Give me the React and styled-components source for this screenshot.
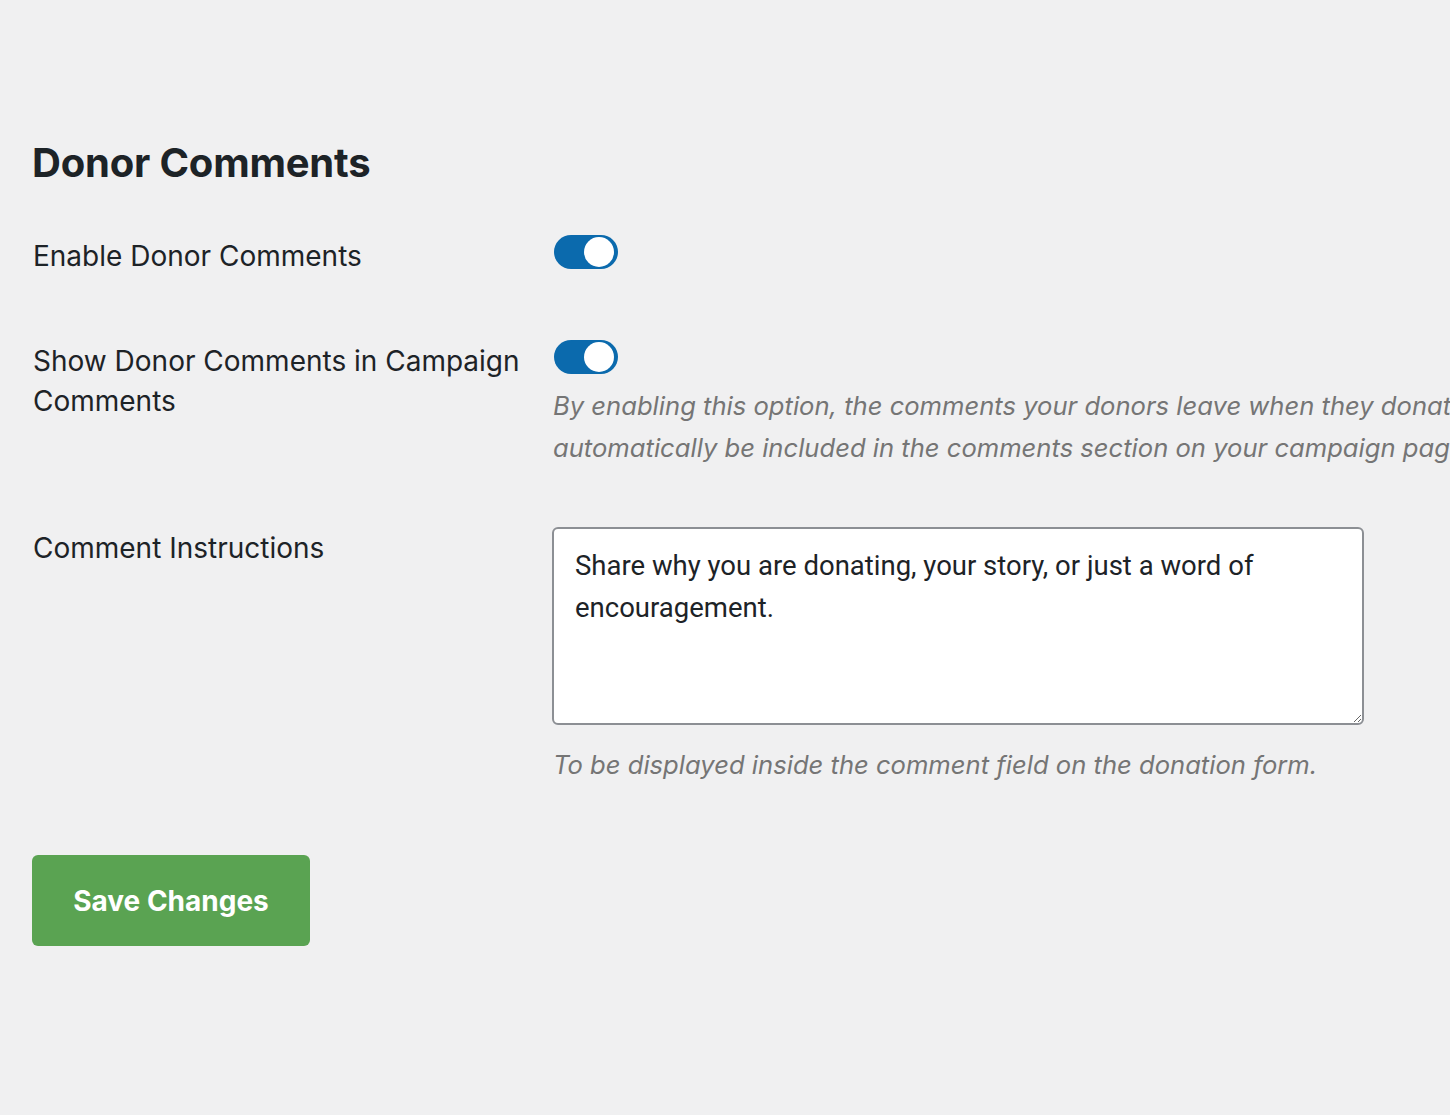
import React from "react";
import styled, { createGlobalStyle } from "styled-components";

// Global
const GlobalStyle = createGlobalStyle`
  html, body {
    margin: 0;
    padding: 0;
    background: #f0f0f1;
    overflow: hidden;
  }
  * {
    box-sizing: border-box;
  }
`;

// Styles
const Page = styled.div`
  width: 1450px;
  height: 1115px;
  padding: 139px 0 0 32px;
  font-family: Inter, "Noto Sans", sans-serif;
  color: #1d2327;
  background: #f0f0f1;
  overflow: hidden;
`;

const Title = styled.h2`
  margin: 0 0 48px;
  font-size: 40px;
  font-weight: 700;
  line-height: 48px;
  letter-spacing: -0.2px;
  color: #1d2327;
`;

const Row = styled.div`
  display: grid;
  grid-template-columns: 520px 1fr;
  align-items: start;
  margin-bottom: ${(p) => p.$gap || 0}px;
`;

const Label = styled.div`
  padding: 1px 10px 0 1px;
  font-size: 28px;
  line-height: 40px;
  color: #1d2327;
`;

const Field = styled.div`
  display: flex;
  flex-direction: column;
  align-items: flex-start;
  min-width: 0;
`;

const Toggle = styled.span`
  position: relative;
  display: block;
  width: 64px;
  height: 34px;
  margin-left: 2px;
  border-radius: 17px;
  background: #0b6aad;
`;

const Knob = styled.span`
  position: absolute;
  top: 2px;
  right: 4px;
  width: 30px;
  height: 30px;
  border-radius: 50%;
  background: #fff;
`;

const Description = styled.p`
  width: 1000px;
  margin: ${(p) => p.$top || 0}px 0 0;
  padding-left: 1px;
  font-size: 25.6px;
  font-style: italic;
  line-height: 42px;
  color: #757575;
`;

const TextArea = styled.textarea`
  display: block;
  width: 812px;
  height: 198px;
  margin: 0;
  padding: 16px 21px;
  border: 2px solid #8c8f94;
  border-radius: 6px;
  background: #fff;
  font-family: Roboto, "Liberation Sans", sans-serif;
  font-size: 27.5px;
  line-height: 42px;
  color: #1d2327;
  resize: vertical;
  outline: none;
`;

const SaveButton = styled.button`
  width: 278px;
  height: 91px;
  border: 0;
  border-radius: 6px;
  background: #5aa352;
  font-family: Inter, "Noto Sans", sans-serif;
  font-size: 28px;
  font-weight: 700;
  color: #fff;
  cursor: pointer;
`;

const Switch = () => (
  <Toggle>
    <Knob />
  </Toggle>
);

const App = () => (
  <>
    <GlobalStyle />
    <Page>
      <Title>Donor Comments</Title>
      <Row $gap={64}>
        <Label>Enable Donor Comments</Label>
        <Field>
          <Switch />
        </Field>
      </Row>
      <Row $gap={58}>
        <Label>Show Donor Comments in Campaign Comments</Label>
        <Field>
          <Switch />
          <Description $top={11}>
            By enabling this option, the comments your donors leave when they donate will
            automatically be included in the comments section on your campaign page.
          </Description>
        </Field>
      </Row>
      <Row $gap={69}>
        <Label>Comment Instructions</Label>
        <Field>
          <TextArea
            defaultValue="Share why you are donating, your story, or just a word of encouragement."
          />
          <Description $top={19}>
            To be displayed inside the comment field on the donation form.
          </Description>
        </Field>
      </Row>
      <SaveButton>Save Changes</SaveButton>
    </Page>
  </>
);

export default App;
